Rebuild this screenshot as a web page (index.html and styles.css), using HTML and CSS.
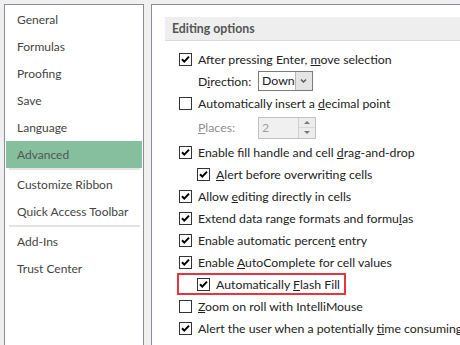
FILE: index.html
```html
<!DOCTYPE html>
<html>
<head>
<meta charset="utf-8">
<link rel="stylesheet" href="styles.css">
</head>
<body>
<div class="window">
  <nav class="nav">
    <div class="nav-item">General</div>
    <div class="nav-item">Formulas</div>
    <div class="nav-item">Proofing</div>
    <div class="nav-item">Save</div>
    <div class="nav-item">Language</div>
    <div class="nav-item active">Advanced</div>
    <div class="nav-sep"></div>
    <div class="nav-item">Customize Ribbon</div>
    <div class="nav-item">Quick Access Toolbar</div>
    <div class="nav-sep"></div>
    <div class="nav-item">Add-Ins</div>
    <div class="nav-item">Trust Center</div>
  </nav>
  <main class="content">
    <div class="section-head">Editing options</div>
    <div class="options">
      <div class="row">
        <span class="cb"><svg viewBox="0 0 11 11"><path d="M2 5.2 L4.3 7.6 L9 2.6" /></svg></span>
        <span>After pressing Enter, <u>m</u>ove selection</span>
      </div>
      <div class="row sub">
        <span class="label">D<u>i</u>rection:</span>
        <span class="select"><span class="select-val">Down</span><span class="select-btn"><svg viewBox="0 0 9 6"><path d="M2 1.5 L4.5 4 L7 1.5" /></svg></span></span>
      </div>
      <div class="row">
        <span class="cb empty"></span>
        <span>Automatically insert a <u>d</u>ecimal point</span>
      </div>
      <div class="row sub tall disabled">
        <span class="label"><u>P</u>laces:</span>
        <span class="spin"><span class="spin-val">2</span><span class="spin-btns"><span class="spin-up"></span><span class="spin-down"></span></span></span>
      </div>
      <div class="row">
        <span class="cb"><svg viewBox="0 0 11 11"><path d="M2 5.2 L4.3 7.6 L9 2.6" /></svg></span>
        <span>Enable fill handle and cell <u>d</u>rag-and-drop</span>
      </div>
      <div class="row indent">
        <span class="cb"><svg viewBox="0 0 11 11"><path d="M2 5.2 L4.3 7.6 L9 2.6" /></svg></span>
        <span><u>A</u>lert before overwriting cells</span>
      </div>
      <div class="row">
        <span class="cb"><svg viewBox="0 0 11 11"><path d="M2 5.2 L4.3 7.6 L9 2.6" /></svg></span>
        <span>Allow <u>e</u>diting directly in cells</span>
      </div>
      <div class="row">
        <span class="cb"><svg viewBox="0 0 11 11"><path d="M2 5.2 L4.3 7.6 L9 2.6" /></svg></span>
        <span>Extend data range formats and formu<u>l</u>as</span>
      </div>
      <div class="row">
        <span class="cb"><svg viewBox="0 0 11 11"><path d="M2 5.2 L4.3 7.6 L9 2.6" /></svg></span>
        <span>Enable automatic percen<u>t</u> entry</span>
      </div>
      <div class="row">
        <span class="cb"><svg viewBox="0 0 11 11"><path d="M2 5.2 L4.3 7.6 L9 2.6" /></svg></span>
        <span>Enable <u>A</u>utoComplete for cell values</span>
      </div>
      <div class="row highlight">
        <span class="cb"><svg viewBox="0 0 11 11"><path d="M2 5.2 L4.3 7.6 L9 2.6" /></svg></span>
        <span>Automatically <u>F</u>lash Fill</span>
      </div>
      <div class="row">
        <span class="cb empty"></span>
        <span><u>Z</u>oom on roll with IntelliMouse</span>
      </div>
      <div class="row">
        <span class="cb"><svg viewBox="0 0 11 11"><path d="M2 5.2 L4.3 7.6 L9 2.6" /></svg></span>
        <span>Alert the user when a potentially <u>t</u>ime consuming</span>
      </div>
    </div>
  </main>
</div>
</body>
</html>
```

FILE: styles.css
```css
html, body {
  margin: 0;
  padding: 0;
  background: #f0f0f0;
  overflow: hidden;
  height: 345px;
}
body {
  font-family: "Lato", "Liberation Sans", sans-serif;
  font-size: 12px;
  color: #222;
}
.window {
  display: flex;
  gap: 7px;
  padding: 4px 0 0 4px;
  height: 345px;
  box-sizing: border-box;
}
.nav {
  width: 138px;
  flex: none;
  background: #fff;
  border: 1px solid #8a8d96;
  border-bottom: none;
  padding-top: 1px;
}
.nav-item {
  height: 27px;
  line-height: 27px;
  margin: 0 1px;
  padding-left: 11px;
  color: #444;
  white-space: nowrap;
}
.nav-item.active {
  background: #85bf9e;
  color: #555;
}
.nav-sep {
  height: 2px;
  background: #e4e4e4;
  margin: 0 3px 1px 4px;
}
.content {
  flex: 1;
  min-width: 0;
  background: #fff;
  border-top: 1px solid #8a8d96;
  border-left: 1px solid #8a8d96;
  overflow: hidden;
  font-size: 12.3px;
}
.section-head {
  margin: 12px 0 0 13px;
  height: 23px;
  line-height: 23px;
  padding-left: 7px;
  background: #eeeeee;
  border-bottom: 1px solid #dcdcdc;
  font-weight: bold;
  color: #555;
}
.options {
  margin-top: 7px;
}
.row {
  height: 22px;
  display: flex;
  align-items: center;
  padding-left: 27px;
  white-space: nowrap;
  box-sizing: border-box;
}
.row.sub {
  padding-left: 46px;
}
.row.tall {
  height: 27px;
}
.row.indent {
  padding-left: 45px;
}
.row.highlight {
  margin-left: 25px;
  width: 169px;
  padding-left: 18px;
  border: 2px solid #e8343c;
}
.cb {
  width: 13px;
  height: 13px;
  box-sizing: border-box;
  border: 1px solid #333;
  background: #fff;
  margin-right: 6px;
  flex: none;
  display: flex;
}
.cb svg {
  width: 11px;
  height: 11px;
}
.cb path {
  fill: none;
  stroke: #000;
  stroke-width: 2;
}
.label {
  width: 60px;
  flex: none;
}
.disabled .label {
  color: #8d8d8d;
}
.select {
  display: flex;
  width: 55px;
  height: 20px;
  box-sizing: border-box;
  border: 1px solid #7a7a7a;
  background: #fff;
}
.select-val {
  flex: 1;
  padding-left: 3px;
  line-height: 18px;
}
.select-btn {
  width: 18px;
  background: #e4e4e4;
  border-left: 1px solid #b8b8b8;
  display: flex;
  align-items: center;
  justify-content: center;
}
.select-btn svg {
  width: 9px;
  height: 6px;
}
.select-btn path {
  fill: none;
  stroke: #555;
  stroke-width: 1.4;
}
.spin {
  display: flex;
  width: 58px;
  height: 22px;
  box-sizing: border-box;
  border: 1px solid #c2c2c2;
  background: #f0f0f0;
}
.spin-val {
  flex: 1;
  padding-left: 3px;
  color: #a0a0a0;
  line-height: 20px;
}
.spin-btns {
  width: 16px;
  display: flex;
  flex-direction: column;
  border-left: 1px solid #d0d0d0;
}
.spin-up, .spin-down {
  flex: 1;
  position: relative;
  background: #ececec;
}
.spin-up {
  border-bottom: 1px solid #d8d8d8;
}
.spin-up::after, .spin-down::after {
  content: "";
  position: absolute;
  left: 5px;
  top: 3px;
  border-left: 3px solid transparent;
  border-right: 3px solid transparent;
}
.spin-up::after {
  border-bottom: 3px solid #777;
}
.spin-down::after {
  border-top: 3px solid #777;
}
u {
  text-decoration: underline;
  text-underline-offset: 1px;
}
```
